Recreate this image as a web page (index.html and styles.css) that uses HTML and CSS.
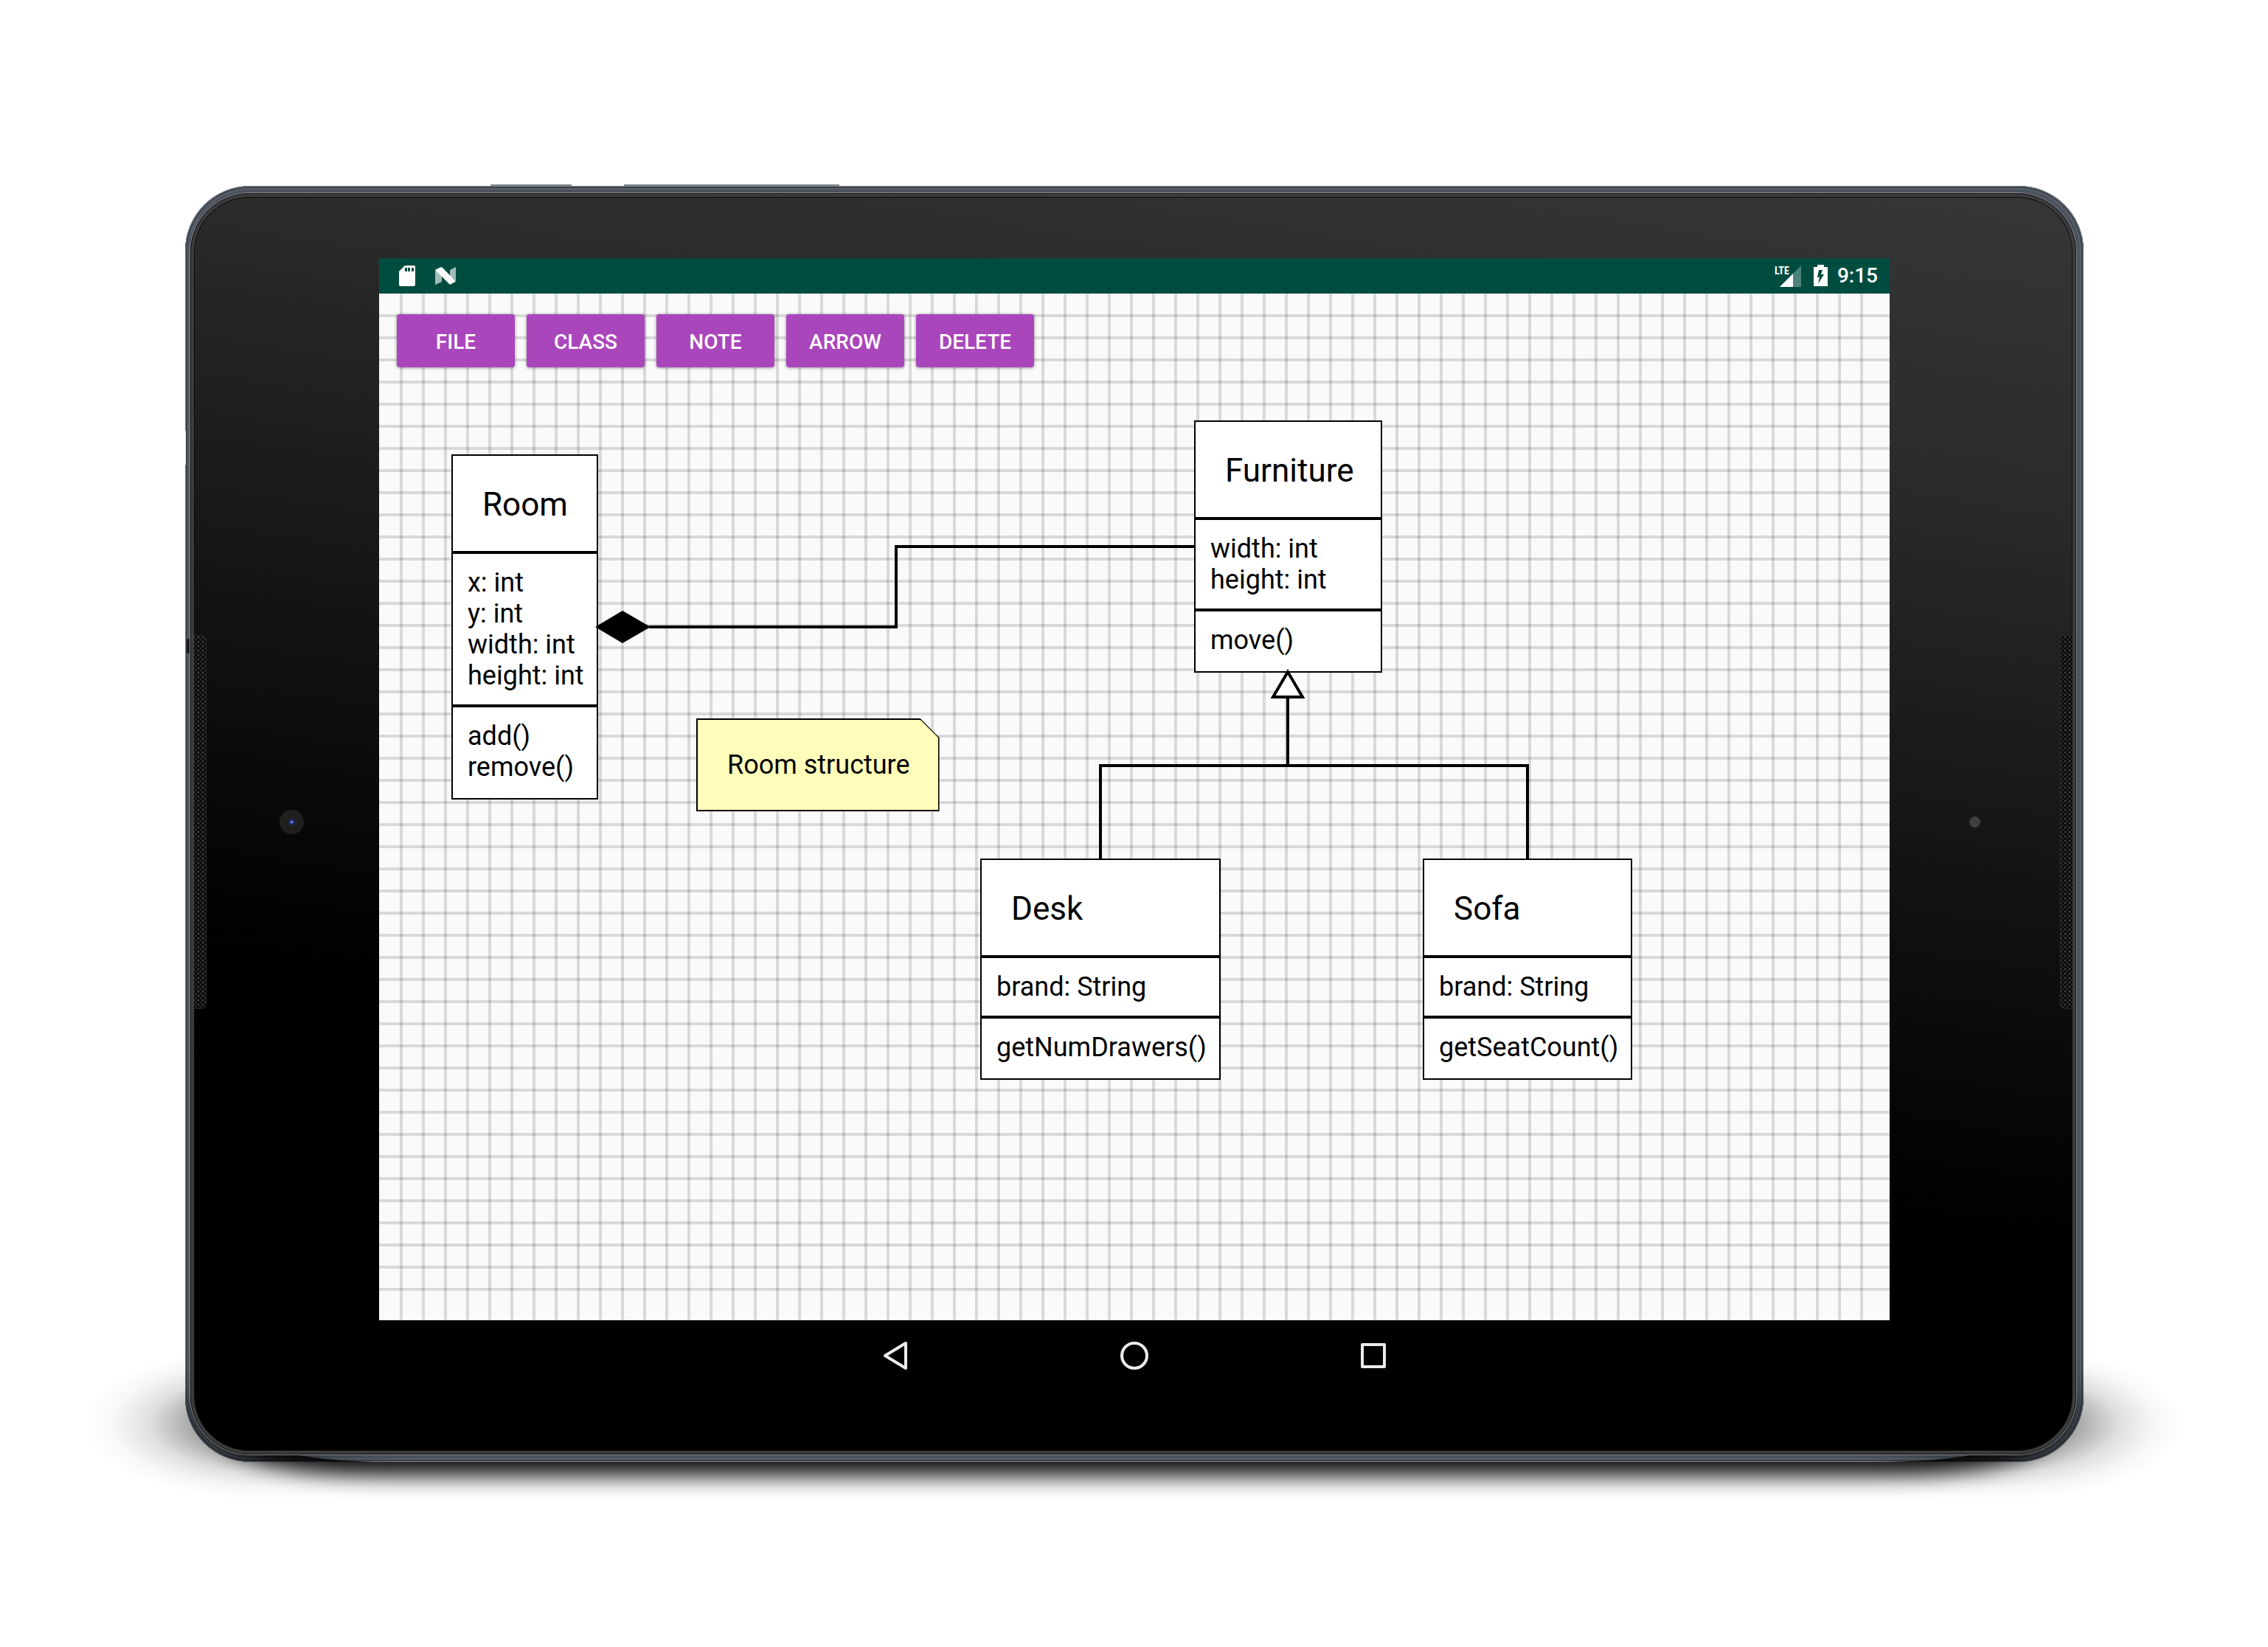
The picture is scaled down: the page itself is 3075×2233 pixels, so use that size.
FILE: index.html
```html
<!DOCTYPE html>
<html lang="en">
<head>
<meta charset="utf-8">
<meta name="viewport" content="width=device-width, initial-scale=1">
<title>Class diagram editor</title>
<link rel="stylesheet" href="styles.css">
</head>
<body>
<main class="stage">
  <div class="device">
    <span class="power-key"></span>
    <span class="volume-key"></span>
    <span class="side-notch"></span>
    <span class="port"></span>
    <div class="glass">
      <div class="bezel bezel-left">
        <span class="speaker"></span>
        <span class="lens-area"><span class="camera"></span></span>
      </div>

      <div class="screen">
        <header class="status-bar">
          <div class="status-group notifications">
            <svg width="24" height="32" viewBox="0 0 24 32" aria-hidden="true">
              <path fill="#fff" fill-rule="evenodd" d="M9 2H21Q23 2 23 4V28Q23 30 21 30H3Q1 30 1 28V10ZM9 5V10H12V5ZM13 5V10H16V5ZM18 5V10H21V5Z"/>
            </svg>
            <svg width="28" height="32" viewBox="0 0 28 32" aria-hidden="true">
              <path fill="#a2bdb8" d="M0 8L9 15V24L0 28ZM20 8L28 4V23L20 16Z"/>
              <path fill="#fff" d="M0 7.700L7.500 4.300Q9 4 10 5L28 23.500L21 27.500Q20 28 19 27Z"/>
            </svg>
          </div>
          <div class="status-group system">
            <svg class="signal" width="37" height="32" viewBox="0 0 37 32">
              <path fill="#4d827a" d="M36 2V31H7Z"/>
              <path fill="#fff" d="M25 13V31H7Z"/>
              <text class="network" x="0" y="14">LTE</text>
            </svg>
            <svg class="battery" width="20" height="32" viewBox="0 0 20 32" aria-hidden="true">
              <path fill="#fff" d="M5 1H14V4H19V30H0V4H5Z"/>
              <path fill="#004d40" d="M7 8H12L10 14H14L6 27L8 18H5Z"/>
            </svg>
            <time class="clock">9:15</time>
          </div>
        </header>

        <section class="canvas">
          <nav class="toolbar">
            <button class="tool" type="button">FILE</button>
            <button class="tool" type="button">CLASS</button>
            <button class="tool" type="button">NOTE</button>
            <button class="tool" type="button">ARROW</button>
            <button class="tool" type="button">DELETE</button>
          </nav>

          <article class="node class-box room">
            <h2 class="name">Room</h2>
            <ul class="members">
              <li>x: int</li>
              <li>y: int</li>
              <li>width: int</li>
              <li>height: int</li>
            </ul>
            <ul class="members methods">
              <li>add()</li>
              <li>remove()</li>
            </ul>
          </article>

          <article class="node class-box furniture">
            <h2 class="name">Furniture</h2>
            <ul class="members">
              <li>width: int</li>
              <li>height: int</li>
            </ul>
            <ul class="members methods">
              <li>move()</li>
            </ul>
          </article>

          <article class="node class-box desk">
            <h2 class="name">Desk</h2>
            <ul class="members">
              <li>brand: String</li>
            </ul>
            <ul class="members methods">
              <li>getNumDrawers()</li>
            </ul>
          </article>

          <article class="node class-box sofa">
            <h2 class="name">Sofa</h2>
            <ul class="members">
              <li>brand: String</li>
            </ul>
            <ul class="members methods">
              <li>getSeatCount()</li>
            </ul>
          </article>

          <p class="node note">Room structure</p>

          <svg class="connectors" aria-hidden="true">
            <path class="edge" d="M366 452H701V343H1106"/>
            <path class="diamond" d="M293 452L330 430L368 452L330 474Z"/>
            <path class="edge" d="M1232 547V640M978 766V640H1557V766"/>
            <path class="inherit" d="M1232 513L1252 547H1212Z"/>
          </svg>
        </section>

        <footer class="nav-bar">
          <button class="nav-key" type="button" aria-label="Back">
            <svg width="48" height="48" viewBox="0 0 48 48"><path d="M38 7V41L10 24Z"/></svg>
          </button>
          <button class="nav-key" type="button" aria-label="Home">
            <svg width="48" height="48" viewBox="0 0 48 48"><circle cx="24" cy="24" r="17"/></svg>
          </button>
          <button class="nav-key" type="button" aria-label="Recent apps">
            <svg width="48" height="48" viewBox="0 0 48 48"><rect x="9" y="9" width="30" height="30"/></svg>
          </button>
        </footer>
      </div>

      <div class="bezel bezel-right">
        <span class="lens-area"><span class="sensor"></span></span>
        <span class="speaker"></span>
      </div>
    </div>
  </div>
</main>
</body>
</html>
```
FILE: styles.css
```css
* {
  box-sizing: border-box;
}

body {
  margin: 0;
  background: #fff;
  font-family: Roboto, "Noto Sans", sans-serif;
  color: #000;
}

.stage {
  display: flex;
  min-height: 100vh;
  padding: 252px 250px 251px 251px;
  overflow: hidden;
}

/* Tablet body */

.device {
  position: relative;
  z-index: 0;
  display: flex;
  flex: 1;
  padding: 10px 10px 10px 7px;
  border-radius: 88px;
  background: #4b525c;
  box-shadow:
    inset 0 0 0 1px #7e858b,
    inset 0 0 0 3px #3a414b,
    inset 0 0 2px 5px #5b626e;
}

/* Soft shadow cast on the ground */
.device::before {
  content: "";
  position: absolute;
  z-index: -1;
  left: -135px;
  right: -135px;
  bottom: -62px;
  height: 240px;
  background:
    radial-gradient(ellipse 240px 104px at 240px 126px, rgba(0, 0, 0, 0.65), rgba(0, 0, 0, 0.36) 38%, rgba(0, 0, 0, 0.12) 64%, rgba(0, 0, 0, 0.03) 84%, transparent),
    radial-gradient(ellipse 240px 104px at calc(100% - 240px) 126px, rgba(0, 0, 0, 0.65), rgba(0, 0, 0, 0.36) 38%, rgba(0, 0, 0, 0.12) 64%, rgba(0, 0, 0, 0.03) 84%, transparent);
}

.device::after {
  content: "";
  position: absolute;
  z-index: -2;
  left: 50px;
  right: 50px;
  bottom: 0;
  height: 120px;
  border-radius: 220px / 60px;
  box-shadow: 0 19px 30px 0 rgba(0, 0, 0, 0.95);
}

.glass {
  position: relative;
  display: flex;
  flex: 1;
  padding: 1px 0 0;
  border: 5px solid #3c3c3c;
  border-radius: 80px;
  outline: 1px solid #858b95;
  background: linear-gradient(189deg, #363636, #2b2b2b 19%, #121212 46%, #020202 65%, #000 75%) padding-box;
  box-shadow: inset 0 0 0 1px #0c0c0c;
}

.glass::before {
  content: "";
  position: absolute;
  inset: -5px;
  border: 1px solid #111;
  border-radius: 80px;
}

.power-key,
.volume-key,
.side-notch,
.port {
  position: absolute;
}

.power-key,
.volume-key {
  top: -2px;
  height: 2px;
  background: #7d868b;
}

.power-key {
  left: 414px;
  width: 110px;
}

.volume-key {
  left: 595px;
  width: 292px;
}

.side-notch {
  left: 0;
  top: 332px;
  width: 1px;
  height: 46px;
  background: #fff;
}

.port {
  left: 2px;
  top: 614px;
  width: 5px;
  height: 20px;
  border-radius: 3px 0 0 3px;
  background: #1c1c1c;
}

.bezel {
  display: flex;
  align-items: center;
  padding-bottom: 6px;
}

.bezel-left {
  flex: 0 0 251px;
}

.bezel-right {
  flex: 0 0 248px;
}

.speaker {
  width: 17px;
  height: 507px;
  border: 1px solid #262626;
  border-left: 0;
  border-radius: 0 7px 7px 0;
  background:
    radial-gradient(circle at 2px 2px, #414141 1px, transparent 2px) 4px 0 / 6px 6px,
    radial-gradient(circle at 2px 2px, #2c2c2c 1px, transparent 2px) 1px 3px / 6px 6px,
    #050505;
}

.bezel-right .speaker {
  border-left: 1px solid #262626;
  border-right: 0;
  border-radius: 7px 0 0 7px;
}

.lens-area {
  display: flex;
  flex: 1;
  justify-content: center;
}

.bezel-left .lens-area {
  padding-right: 4px;
}

.camera {
  width: 33px;
  height: 33px;
  border-radius: 50%;
  background: radial-gradient(circle, #6f8fd8 1px, #24357f 2px, #1c2660 4px, #201f1d 5px);
}

.sensor {
  width: 15px;
  height: 15px;
  border-radius: 50%;
  background: #3f3f3f;
}

/* Screen */

.screen {
  display: flex;
  flex: 1;
  flex-direction: column;
  min-width: 0;
  margin: 82px 0 81px;
}

.status-bar {
  display: flex;
  justify-content: space-between;
  height: 48px;
  padding: 0 16px 0 26px;
  background: #004d40;
  color: #fff;
}

.status-group {
  display: flex;
  align-items: center;
}

.notifications {
  gap: 26px;
}

.system {
  gap: 12px;
}

.signal {
  margin-right: 4px;
}

.network {
  fill: #fff;
  font-family: "Roboto Condensed", "Liberation Sans Narrow", Roboto, sans-serif;
  font-size: 14px;
  font-weight: 700;
}

.clock {
  font-size: 28px;
  font-weight: 500;
  line-height: 32px;
}

.canvas {
  position: relative;
  flex: 1;
  min-height: 1100px;
  background: #fafafa;
}

.canvas::before,
.canvas::after {
  content: "";
  position: absolute;
}

.canvas::before {
  inset: 0 15px;
  background: linear-gradient(90deg, transparent 13px, rgba(0, 0, 0, 0.135) 13px 17px, transparent 17px) 0 0 / 30px 100%;
}

.canvas::after {
  inset: 15px 0;
  background: linear-gradient(transparent 13px, rgba(0, 0, 0, 0.135) 13px 17px, transparent 17px) 0 0 / 100% 30px;
}

.toolbar {
  position: relative;
  z-index: 1;
  display: flex;
  gap: 16px;
  padding: 28px 24px;
}

.tool {
  width: 160px;
  height: 72px;
  padding: 3px 0 0;
  border: 0;
  border-radius: 4px;
  background: #aa46bc;
  box-shadow: 0 1px 4px rgba(0, 0, 0, 0.3), 0 0 4px rgba(0, 0, 0, 0.15);
  color: #fff;
  font: 500 28px/32px Roboto, sans-serif;
}

/* Diagram */

.node {
  position: absolute;
  z-index: 1;
  margin: 0;
  white-space: nowrap;
}

.class-box {
  border: 2px solid #000;
  background: #fff;
}

.name {
  margin: 0;
  padding: 40px 36px 37px 40px;
  font-size: 44px;
  font-weight: 400;
  line-height: 52px;
}

.members {
  margin: 0;
  padding: 18px 17px 18px 20px;
  border-top: 4px solid #000;
  font-size: 36px;
  line-height: 42px;
  list-style: none;
}

.methods {
  padding-bottom: 21px;
}

.room {
  left: 98px;
  top: 218px;
}

.furniture {
  left: 1105px;
  top: 172px;
}

.desk {
  left: 815px;
  top: 766px;
}

.sofa {
  left: 1415px;
  top: 766px;
}

.note {
  left: 430px;
  top: 576px;
  padding: 40px 38px 40px 40px;
  border: 2px solid #000;
  background: #fffdb9;
  clip-path: polygon(0 0, calc(100% - 26px) 0, 100% 26px, 100% 100%, 0 100%);
  font-size: 36px;
  line-height: 42px;
}

.note::after {
  content: "";
  position: absolute;
  top: -2px;
  right: -2px;
  width: 26px;
  height: 26px;
  background: linear-gradient(45deg, transparent calc(50% - 2px), #000 calc(50% - 1px));
}

.connectors {
  position: absolute;
  z-index: 2;
  inset: 0;
  width: 100%;
  height: 100%;
  pointer-events: none;
}

.edge {
  fill: none;
  stroke: #000;
  stroke-width: 4;
}

.diamond {
  fill: #000;
}

.inherit {
  fill: #fff;
  stroke: #000;
  stroke-width: 4;
}

/* System navigation */

.nav-bar {
  display: flex;
  align-items: center;
  justify-content: center;
  gap: 276px;
  height: 96px;
  background: #000;
}

.nav-key {
  width: 48px;
  height: 48px;
  padding: 0;
  border: 0;
  background: none;
}

.nav-key svg {
  display: block;
  fill: none;
  stroke: #ebebeb;
  stroke-width: 4;
  stroke-linejoin: round;
}
```
